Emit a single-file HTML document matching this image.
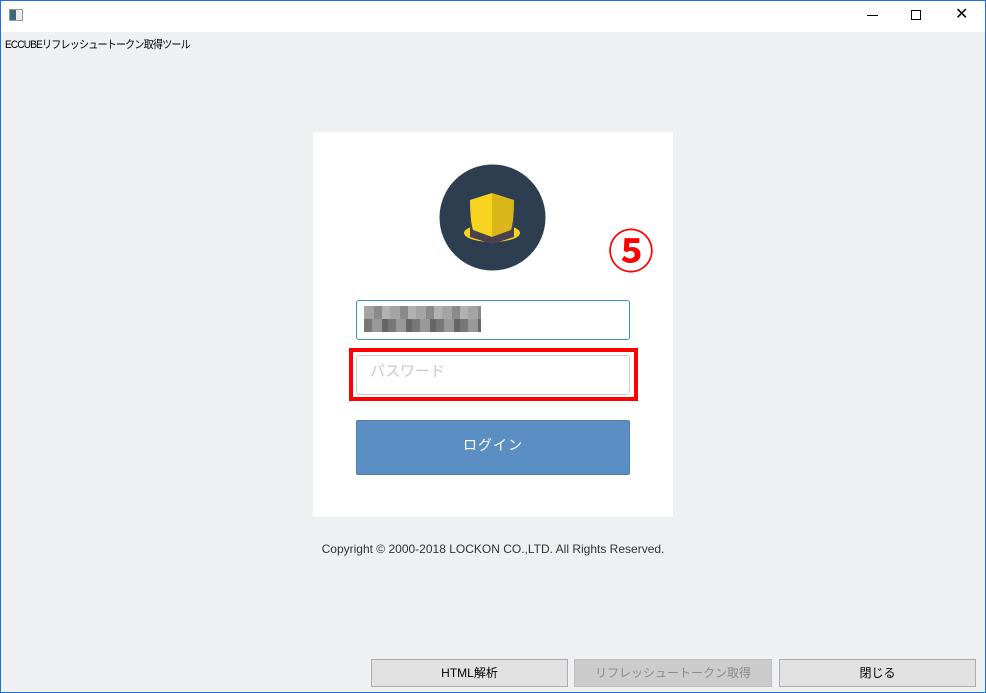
<!DOCTYPE html>
<html><head><meta charset="utf-8"><style>
*{margin:0;padding:0;box-sizing:border-box}
body{width:986px;height:693px;position:relative;background:#eff0f2;font-family:"Liberation Sans","Noto Sans CJK JP",sans-serif;overflow:hidden}
.frame{position:absolute;inset:0;border:1px solid #1a74d8}
.title{position:absolute;left:1px;top:1px;width:984px;height:31px;background:#fff}
.abs{position:absolute}
.btn{position:absolute;top:659px;height:28px;background:#e1e1e1;border:1px solid #adadad;font-size:12px;text-align:center;line-height:27px;color:#000}
</style></head><body>
<div class="title"></div>
<div class="abs" style="left:9px;top:9px;width:14px;height:12px;border:1px solid #999;background:linear-gradient(90deg,#3a6a7a 0 50%,#e8eef0 50%)"></div>
<div class="abs" style="left:867px;top:15px;width:11px;height:1px;background:#000"></div>
<div class="abs" style="left:911px;top:10px;width:10px;height:10px;border:1px solid #000"></div>
<div class="abs" style="left:955px;top:8px;font-size:16px;line-height:14px">✕</div>
<div class="abs" style="left:5px;top:36px;font-size:11px;color:#000;letter-spacing:-0.9px;white-space:nowrap;transform:scaleX(0.915);transform-origin:left">ECCUBEリフレッシュートークン取得ツール</div>

<div class="abs" style="left:313px;top:132px;width:360px;height:385px;background:#fff"></div>
<svg class="abs" style="left:439px;top:164px" width="107" height="107" viewBox="0 0 107 107">
<circle cx="53.5" cy="53.5" r="53" fill="#2c3e50"/>
<ellipse cx="53" cy="69" rx="28" ry="9" fill="#f5d31e"/>
<path d="M31 52 L75 52 L75 73 L53 80 L31 73 Z" fill="#4a4050"/>
<path d="M31 36 L53 29 L53 73 L34 66 Q31 56 31 36 Z" fill="#f5d31e"/>
<path d="M53 29 L75 36 Q75 56 72 66 L53 73 Z" fill="#d9b71a"/>
</svg>
<div class="abs" style="left:608px;top:226px;font-size:46px;color:#f00;font-weight:bold;line-height:52px">⑤</div>

<div class="abs" style="left:356px;top:300px;width:274px;height:40px;border:1px solid #3a8fc0;border-radius:3px;background:#fff"></div>
<div class="abs" style="left:364px;top:306px;width:117px;height:26px;background:repeating-linear-gradient(90deg,#9a9a9a 0 10px,#7d7d7d 10px 18px,#a8a8a8 18px 26px);opacity:.9"></div>
<div class="abs" style="left:364px;top:319px;width:117px;height:13px;background:repeating-linear-gradient(90deg,#777 0 8px,#999 8px 18px,#666 18px 24px)"></div>

<div class="abs" style="left:349px;top:348px;width:289px;height:53px;border:4px solid #f00"></div>
<div class="abs" style="left:356px;top:355px;width:274px;height:40px;border:1px solid #ccc;border-radius:3px;background:#fff"></div>
<div class="abs" style="left:370px;top:362px;font-size:15px;color:#c8c8c8;line-height:20px">パスワード</div>

<div class="abs" style="left:356px;top:420px;width:274px;height:55px;background:#5b8fc4;border:1px solid #4e80b4;border-radius:2px;color:#fff;font-size:14px;text-align:center;line-height:48px;letter-spacing:1px">ログイン</div>

<div class="abs" style="left:0;width:986px;top:542px;text-align:center;font-size:12px;color:#333">Copyright © 2000-2018 LOCKON CO.,LTD. All Rights Reserved.</div>

<div class="btn" style="left:371px;width:197px">HTML解析</div>
<div class="btn" style="left:574px;width:198px;background:#ccc;border-color:#bfbfbf;color:#8a8a8a">リフレッシュートークン取得</div>
<div class="btn" style="left:779px;width:197px">閉じる</div>
<div class="frame"></div>
</body></html>
